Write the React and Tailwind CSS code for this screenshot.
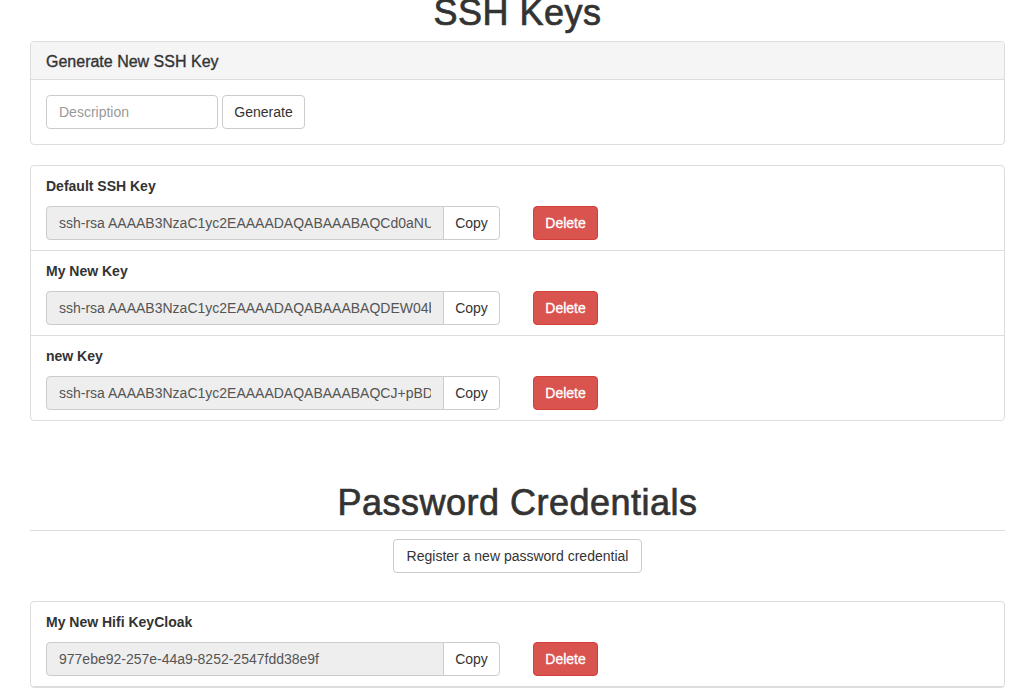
import React from 'react';

const sshKeys = [
  { name: 'Default SSH Key', value: 'ssh-rsa AAAAB3NzaC1yc2EAAAADAQABAAABAQCd0aNUxk2Jq8vR7lPzY3mWc' },
  { name: 'My New Key', value: 'ssh-rsa AAAAB3NzaC1yc2EAAAADAQABAAABAQDEW04bTf9sKx2LmQa7nPe' },
  { name: 'new Key', value: 'ssh-rsa AAAAB3NzaC1yc2EAAAADAQABAAABAQCJ+pBDr3hVw8yZt1oXk5' },
];

const passwords = [
  { name: 'My New Hifi KeyCloak', value: '977ebe92-257e-44a9-8252-2547fdd38e9f' },
];

const KeyRow = ({ name, value, last }) => (
  <div className={`px-[15px] pt-[10px] pb-[10px] ${last ? '' : 'border-b border-[#ddd]'}`}>
    <div className="text-[14px] font-bold leading-[20px] text-[#333]">{name}</div>
    <div className="mt-[10px] flex items-center">
      <div className="flex w-[455px] h-[34px]">
        <input
          readOnly
          value={value}
          className="w-[398px] h-[34px] px-[12px] text-[14px] text-[#555] bg-[#eee] border border-[#ccc] rounded-l-[4px] outline-none"
        />
        <button className="w-[57px] h-[34px] -ml-px text-[14px] text-[#333] bg-white border border-[#ccc] rounded-r-[4px]">
          Copy
        </button>
      </div>
      <button className="ml-[32px] w-[65px] h-[34px] text-[14px] text-white bg-[#d9534f] border border-[#d43f3a] rounded-[4px] [-webkit-text-stroke:0.3px_white]">
        Delete
      </button>
    </div>
  </div>
);

export default function App() {
  return (
    <div className="bg-white min-h-[690px] pl-[30px] pr-[31px] text-[#333] font-['Liberation_Sans',Arial,sans-serif] overflow-hidden">
      {/* SSH keys */}
      <h1 className="-mt-[7px] text-center text-[36px] leading-[40px] tracking-[0.5px] [-webkit-text-stroke:0.7px_#333]">
        SSH Keys
      </h1>

      <div className="mt-[8px] border border-[#ddd] rounded-[4px]">
        <div className="h-[38px] flex items-center pt-[2px] px-[15px] bg-[#f5f5f5] border-b border-[#ddd] rounded-t-[4px] text-[16px] [-webkit-text-stroke:0.35px_#333]">
          Generate New SSH Key
        </div>
        <div className="p-[15px] flex gap-[4px]">
          <input
            placeholder="Description"
            className="w-[172px] h-[34px] px-[12px] text-[14px] border border-[#ccc] rounded-[4px] placeholder:text-[#999] outline-none"
          />
          <button className="w-[83px] h-[34px] text-[14px] bg-white border border-[#ccc] rounded-[4px]">
            Generate
          </button>
        </div>
      </div>

      <div className="mt-[20px] border border-[#ddd] rounded-[4px]">
        {sshKeys.map((k, i) => (
          <KeyRow key={k.name} name={k.name} value={k.value} last={i === sshKeys.length - 1} />
        ))}
      </div>

      {/* Password credentials */}
      <div className="mt-[62px] pb-[7px] border-b border-[#ddd]">
        <h1 className="text-center text-[36px] leading-[40px] tracking-[0.5px] [-webkit-text-stroke:0.7px_#333]">
          Password Credentials
        </h1>
      </div>
      <div className="mt-[8px] flex justify-center">
        <button className="w-[249px] h-[34px] text-[14px] bg-white border border-[#ccc] rounded-[4px]">
          Register a new password credential
        </button>
      </div>

      <div className="mt-[28px] border border-[#ddd] rounded-[4px]">
        {passwords.map((p) => (
          <KeyRow key={p.name} name={p.name} value={p.value} last={false} />
        ))}
      </div>
    </div>
  );
}
